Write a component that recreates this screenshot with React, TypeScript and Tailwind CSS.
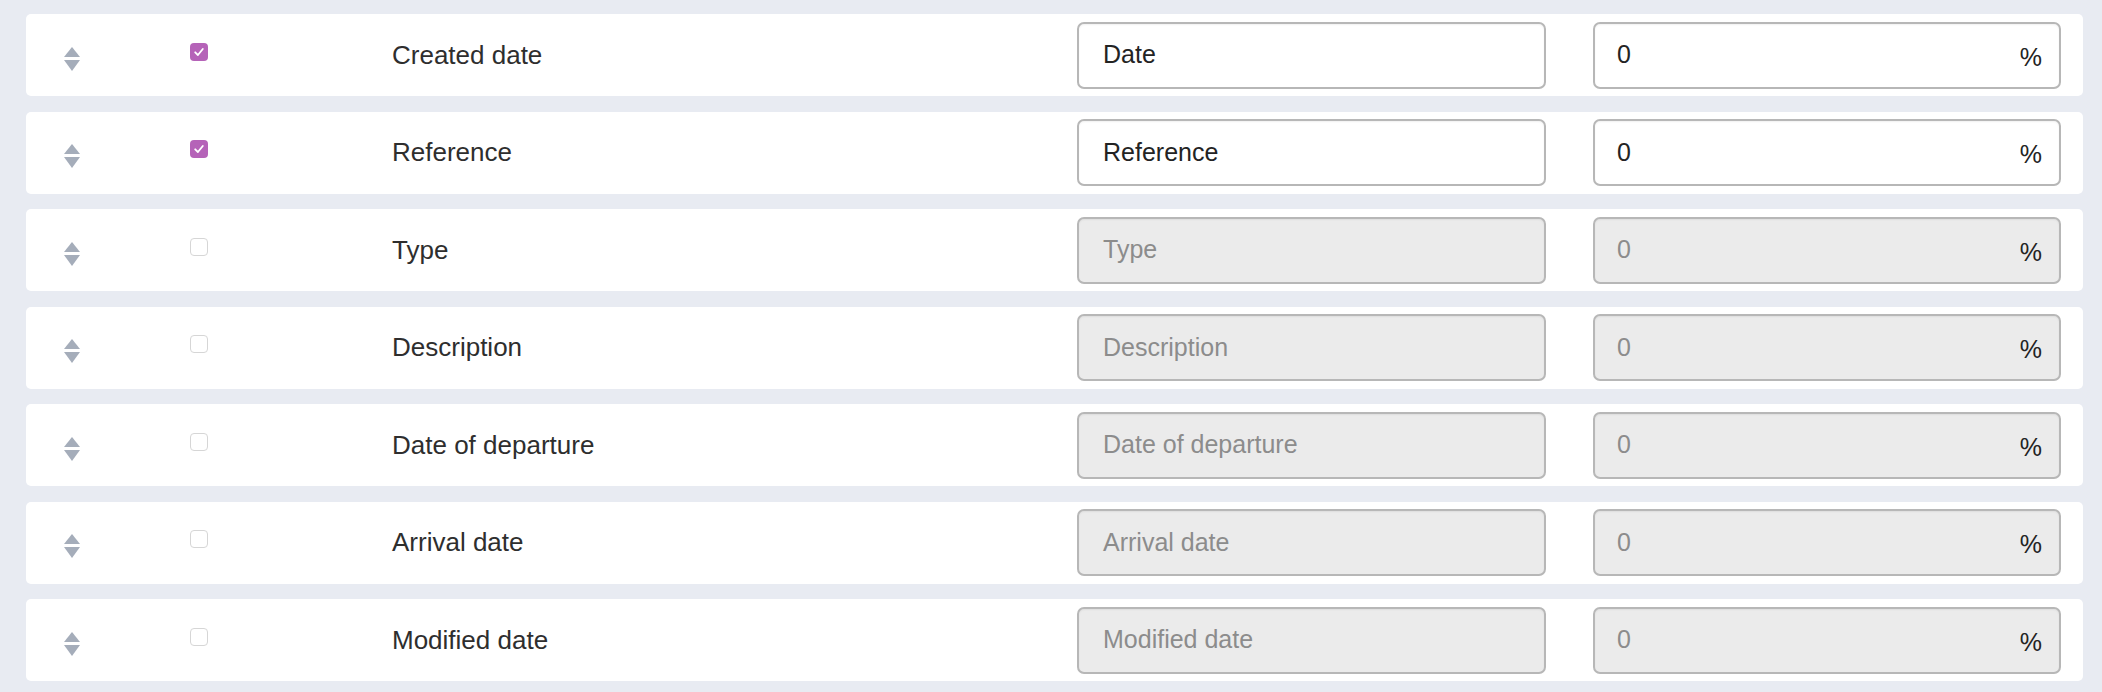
import React from 'react';

interface FieldRow {
  label: string;
  name: string;
  enabled: boolean;
}

const rows: FieldRow[] = [
  { label: 'Created date', name: 'Date', enabled: true },
  { label: 'Reference', name: 'Reference', enabled: true },
  { label: 'Type', name: 'Type', enabled: false },
  { label: 'Description', name: 'Description', enabled: false },
  { label: 'Date of departure', name: 'Date of departure', enabled: false },
  { label: 'Arrival date', name: 'Arrival date', enabled: false },
  { label: 'Modified date', name: 'Modified date', enabled: false },
];

function SortHandle() {
  return (
    <svg width="16" height="24" viewBox="0 0 16 24" className="block">
      <path d="M8 0 L16 10 L0 10 Z" fill="#a5adba" />
      <path d="M0 13 L16 13 L8 24 Z" fill="#a5adba" />
    </svg>
  );
}

function Checkbox({ checked }: { checked: boolean }) {
  if (checked) {
    return (
      <div className="w-[18px] h-[18px] rounded-[4px] bg-[#b563b8] flex items-center justify-center">
        <svg width="12" height="12" viewBox="0 0 12 12">
          <path d="M2.2 6.3 L4.9 9 L9.8 3" fill="none" stroke="#fff" strokeWidth="1.8" strokeLinecap="round" strokeLinejoin="round" />
        </svg>
      </div>
    );
  }
  return <div className="w-[18px] h-[18px] rounded-[4px] bg-white border border-[#d6d6d6]"></div>;
}

export default function App() {
  return (
    <div className="w-[2102px] h-[692px] bg-[#e8ebf2] pt-[14px] pl-[26px] pr-[19px] font-['Liberation_Sans',Arial,sans-serif]">
      <div className="flex flex-col gap-[15.5px]">
        {rows.map((row) => (
          <div key={row.label} className="h-[82px] bg-white rounded-[5px] flex items-center pr-[22px]">
            {/* Drag handle */}
            <div className="w-[164px] pl-[38px] mt-[7px]">
              <SortHandle />
            </div>

            {/* Visible toggle */}
            <div className="w-[202px] mb-[7px]">
              <Checkbox checked={row.enabled} />
            </div>

            {/* Label */}
            <div className="flex-1 text-[26px] text-[#2e2e2e]">{row.label}</div>

            {/* Column name */}
            <div
              className={`w-[469px] h-[67px] rounded-[7px] border-2 border-[#b7b7b7] shadow-[inset_0_1px_2px_rgba(0,0,0,0.06)] flex items-center pl-[24px] text-[25px] ${
                row.enabled ? 'bg-white text-[#232323]' : 'bg-[#ebebeb] text-[#8c8c8c]'
              }`}
            >
              {row.name}
            </div>

            {/* Width percent */}
            <div
              className={`ml-[47px] w-[468px] h-[67px] rounded-[7px] border-2 border-[#b7b7b7] shadow-[inset_0_1px_2px_rgba(0,0,0,0.06)] flex items-center pl-[22px] pr-[17px] text-[25px] ${
                row.enabled ? 'bg-white' : 'bg-[#ebebeb]'
              }`}
            >
              <span className={row.enabled ? 'text-[#232323]' : 'text-[#8c8c8c]'}>0</span>
              <span className="ml-auto mt-[5px] text-[#232323]">%</span>
            </div>
          </div>
        ))}
      </div>
    </div>
  );
}
